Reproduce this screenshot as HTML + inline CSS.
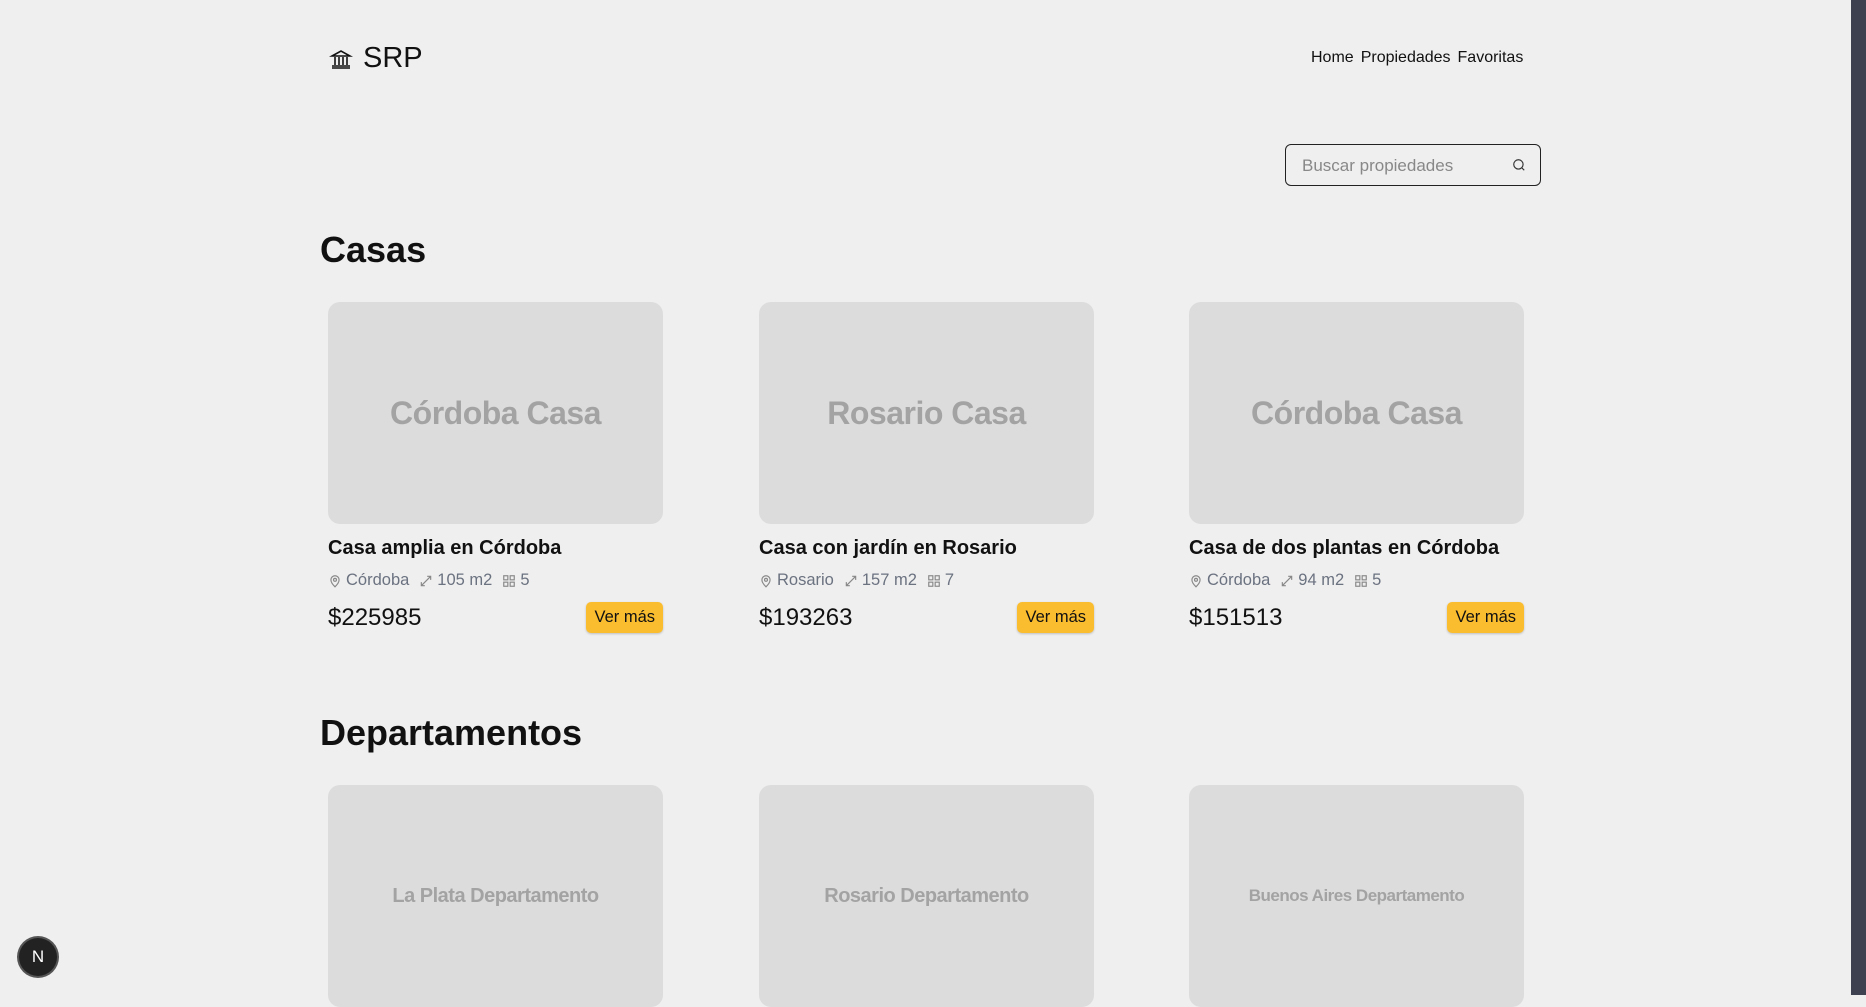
<!DOCTYPE html>
<html><head><meta charset="utf-8"><style>
*{box-sizing:border-box;margin:0;padding:0}
html,body{width:1866px;height:995px;overflow:hidden;background:#efefef;font-family:"Liberation Sans",sans-serif;color:#111}
.abs{position:absolute}
.logo{left:329px;top:42px;display:flex;align-items:center;gap:10px;font-size:29px}
.nav{left:1311px;top:49px;font-size:16px;white-space:nowrap}
.nav span{margin-right:7px}
.search{left:1285px;top:144px;width:256px;height:42px;border:1.5px solid #222;border-radius:6px;font-size:17px;color:#888;padding:11px 16px}
h2{position:absolute;left:320px;font-size:36px;font-weight:700}
.card{position:absolute;width:335px}
.img{width:335px;height:222px;background:#dcdcdc;border-radius:12px;display:flex;align-items:center;justify-content:center;color:#a3a3a3;font-weight:700;font-size:32px;letter-spacing:-0.5px}
.img.s{font-size:20px}
.t{margin-top:13px;font-size:20px;font-weight:700}
.m{margin-top:11px;font-size:16.5px;color:#6b7280;display:flex;align-items:center;gap:4px}
.m svg{margin-left:6px}
.m svg:first-child{margin-left:0}
.p{margin-top:12px;display:flex;justify-content:space-between;align-items:center;font-size:24px}
.b{background:#fbbd30;border-radius:5px;font-size:16.5px;padding:6px 8px;box-shadow:0 1px 2px rgba(0,0,0,.2)}
.sb{left:1851px;top:0;width:15px;height:995px;background:#3e4250}
.nx{left:19px;top:938px;width:38px;height:38px;border-radius:50%;background:#222;color:#fff;font-size:17px;display:flex;align-items:center;justify-content:center;box-shadow:0 0 0 2px #555}
</style></head><body>
<div class="abs logo"><svg width="24" height="24" viewBox="0 0 24 24" fill="none" stroke="#111" stroke-width="1.6"><path d="M3 9l9-5 9 5zM4 9h16M6 10v8M10 10v8M14 10v8M18 10v8M3 19h18M3 21h18"/></svg><span>SRP</span></div>
<div class="abs nav"><span>Home</span><span>Propiedades</span><span>Favoritas</span></div>
<div class="abs search">Buscar propiedades<svg style="position:absolute;right:14px;top:13px" width="14" height="14" viewBox="0 0 24 24" fill="none" stroke="#333" stroke-width="2"><circle cx="11" cy="11" r="8"/><path d="M21 21l-4-4"/></svg></div>
<h2 style="top:229px">Casas</h2>
<h2 style="top:712px">Departamentos</h2>

<div class="card" style="left:328px;top:302px"><div class="img">Córdoba Casa</div><div class="t">Casa amplia en Córdoba</div>
<div class="m"><svg width="14" height="14" viewBox="0 0 24 24" fill="none" stroke="#888" stroke-width="2"><path d="M12 22s7-7 7-12a7 7 0 0 0-14 0c0 5 7 12 7 12z"/><circle cx="12" cy="10" r="2.5"/></svg>Córdoba<svg width="14" height="14" viewBox="0 0 24 24" fill="none" stroke="#888" stroke-width="2"><path d="M4 20L20 4M14 4h6v6M4 14v6h6"/></svg>105 m2<svg width="14" height="14" viewBox="0 0 24 24" fill="none" stroke="#888" stroke-width="2"><rect x="3" y="3" width="7" height="7"/><rect x="14" y="3" width="7" height="7"/><rect x="3" y="14" width="7" height="7"/><rect x="14" y="14" width="7" height="7"/></svg>5</div>
<div class="p"><span>$225985</span><span class="b">Ver más</span></div></div>

<div class="card" style="left:759px;top:302px"><div class="img">Rosario Casa</div><div class="t">Casa con jardín en Rosario</div>
<div class="m"><svg width="14" height="14" viewBox="0 0 24 24" fill="none" stroke="#888" stroke-width="2"><path d="M12 22s7-7 7-12a7 7 0 0 0-14 0c0 5 7 12 7 12z"/><circle cx="12" cy="10" r="2.5"/></svg>Rosario<svg width="14" height="14" viewBox="0 0 24 24" fill="none" stroke="#888" stroke-width="2"><path d="M4 20L20 4M14 4h6v6M4 14v6h6"/></svg>157 m2<svg width="14" height="14" viewBox="0 0 24 24" fill="none" stroke="#888" stroke-width="2"><rect x="3" y="3" width="7" height="7"/><rect x="14" y="3" width="7" height="7"/><rect x="3" y="14" width="7" height="7"/><rect x="14" y="14" width="7" height="7"/></svg>7</div>
<div class="p"><span>$193263</span><span class="b">Ver más</span></div></div>

<div class="card" style="left:1189px;top:302px"><div class="img">Córdoba Casa</div><div class="t">Casa de dos plantas en Córdoba</div>
<div class="m"><svg width="14" height="14" viewBox="0 0 24 24" fill="none" stroke="#888" stroke-width="2"><path d="M12 22s7-7 7-12a7 7 0 0 0-14 0c0 5 7 12 7 12z"/><circle cx="12" cy="10" r="2.5"/></svg>Córdoba<svg width="14" height="14" viewBox="0 0 24 24" fill="none" stroke="#888" stroke-width="2"><path d="M4 20L20 4M14 4h6v6M4 14v6h6"/></svg>94 m2<svg width="14" height="14" viewBox="0 0 24 24" fill="none" stroke="#888" stroke-width="2"><rect x="3" y="3" width="7" height="7"/><rect x="14" y="3" width="7" height="7"/><rect x="3" y="14" width="7" height="7"/><rect x="14" y="14" width="7" height="7"/></svg>5</div>
<div class="p"><span>$151513</span><span class="b">Ver más</span></div></div>

<div class="card" style="left:328px;top:785px"><div class="img s">La Plata Departamento</div></div>
<div class="card" style="left:759px;top:785px"><div class="img s">Rosario Departamento</div></div>
<div class="card" style="left:1189px;top:785px"><div class="img s" style="font-size:17px">Buenos Aires Departamento</div></div>

<div class="abs sb"></div>
<div class="abs nx">N</div>
</body></html>
